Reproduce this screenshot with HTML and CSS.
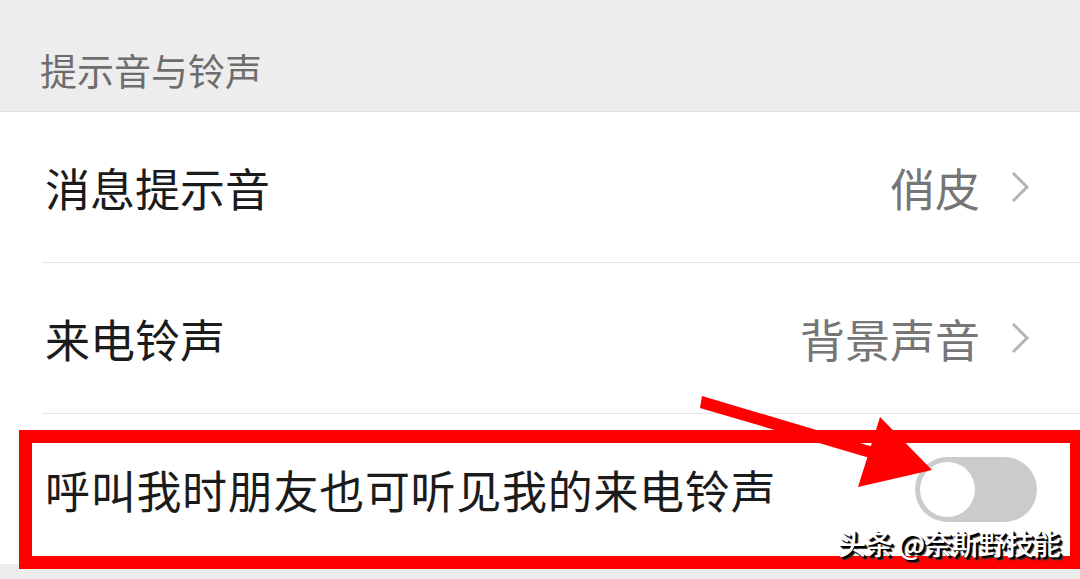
FILE: index.html
```html
<!DOCTYPE html>
<html lang="zh-CN">
<head>
    <meta charset="UTF-8">
    <meta name="viewport" content="width=device-width, initial-scale=1.0">
    <title>提示音与铃声</title>
    <link rel="stylesheet" href="styles.css">
</head>
<body>
<div id="tela">
    <div class="secao">提示音与铃声</div>
    <div class="lista">
        <div class="linha">
            <span class="rotulo">消息提示音</span>
            <span class="valor">俏皮
                <svg class="seta" width="20" height="32" viewBox="0 0 20 32"><polyline points="3,2 17,16 3,30" fill="none" stroke="#b4b4b4" stroke-width="3"/></svg>
            </span>
        </div>
        <div class="linha">
            <span class="rotulo">来电铃声</span>
            <span class="valor">背景声音
                <svg class="seta" width="20" height="32" viewBox="0 0 20 32"><polyline points="3,2 17,16 3,30" fill="none" stroke="#b4b4b4" stroke-width="3"/></svg>
            </span>
        </div>
        <div class="linha ultima">
            <span class="rotulo">呼叫我时朋友也可听见我的来电铃声</span>
            <div class="chave"><div class="bolinha"></div></div>
        </div>
    </div>

    <div class="destaque"></div>
    <svg class="flecha" width="260" height="110" viewBox="0 0 260 110">
        <polygon points="22,16 20,28 200,81 200,69" fill="#ff0000"/>
        <polygon points="200,37 252,90 178,107" fill="#ff0000"/>
    </svg>
    <div class="marca">头条 @奈斯野技能</div>
</div>
</body>
</html>
```

FILE: styles.css
```css
body {
    margin: 0;
    background-color: #ededed;
    font-family: "Noto Sans CJK SC", "Noto Sans", sans-serif;
}

#tela {
    position: relative;
    width: 1080px;
    height: 579px;
    overflow: hidden;
}

.secao {
    height: 112px;
    box-sizing: border-box;
    padding: 44px 0 0 40px;
    font-size: 37px;
    line-height: 52px;
    color: #6d6d6d;
    border-bottom: 1px solid #e2e2e2;
}

.lista {
    background-color: #ffffff;
    padding-left: 42px;
}

.linha {
    height: 150px;
    display: flex;
    align-items: center;
    justify-content: space-between;
    padding: 0 50px 0 3px;
    border-bottom: 1px solid #e5e5e5;
    font-size: 45px;
    color: #1b1b1b;
}

.linha.ultima {
    border-bottom: none;
    padding-right: 43px;
}

.ultima .rotulo {
    letter-spacing: 0.7px;
}

.valor {
    display: flex;
    align-items: center;
    gap: 30px;
    color: #767676;
}

.seta {
    display: block;
}

.chave {
    width: 122px;
    height: 65px;
    border-radius: 33px;
    background-color: #cbcbcb;
    display: flex;
    align-items: center;
    padding-left: 5px;
    box-sizing: border-box;
}

.bolinha {
    width: 55px;
    height: 55px;
    border-radius: 50%;
    background-color: #ffffff;
}

.destaque {
    position: absolute;
    left: 19px;
    top: 430px;
    width: 1064px;
    height: 139px;
    box-sizing: border-box;
    border: 13px solid #ff0000;
}

.flecha {
    position: absolute;
    left: 680px;
    top: 380px;
}

.marca {
    position: absolute;
    left: 838px;
    top: 525px;
    font-size: 28px;
    line-height: 36px;
    font-weight: 500;
    color: #ffffff;
    text-shadow: 2px 2px 0 #000000, 1px 1px 0 #000000, 3px 3px 1px #333333;
    letter-spacing: -0.8px;
}
```
